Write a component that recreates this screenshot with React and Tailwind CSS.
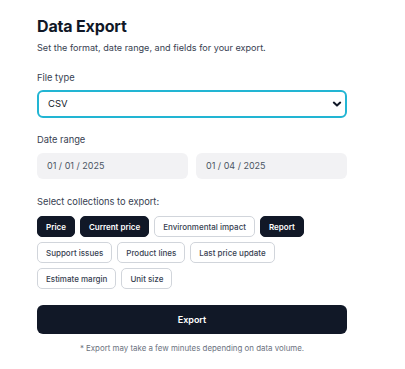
import React from "react";

const chips = [
  ["Price", true],
  ["Current price", true],
  ["Environmental impact", false],
  ["Report", true],
  ["Support issues", false],
  ["Product lines", false],
  ["Last price update", false],
  ["Estimate margin", false],
  ["Unit size", false],
];

export default function App() {
  return (
    <div className="w-[405px] h-[369px] bg-white text-[#111827]" style={{ fontFamily: "Inter, 'Noto Sans', sans-serif" }}>
      <div className="w-[310px] ml-[37px] pt-[16px] flex flex-col">
        <h1 className="text-[16px] leading-[20px] font-bold tracking-[-0.01em]">Data Export</h1>
        <p className="mt-[5px] text-[9.1px] leading-[14px] text-[#374151]">Set the format, date range, and fields for your export.</p>

        <label className="mt-[16px] text-[9.3px] leading-[14px] text-[#374151]">File type</label>
        <div className="mt-[5px] h-[28px] rounded-[6px] border-2 border-[#22b5d3] flex items-center justify-between pl-[9px] pr-[3px]">
          <span className="text-[9.5px]">CSV</span>
          <svg width="10" height="10" viewBox="0 0 10 10" fill="none" stroke="#111827" strokeWidth="2" strokeLinecap="round" strokeLinejoin="round"><path d="M1.8 3.6L5 6.6l3.2-3" /></svg>
        </div>

        <label className="mt-[15px] text-[9.3px] leading-[14px] text-[#374151]">Date range</label>
        <div className="mt-[6px] grid grid-cols-2 gap-[8px]">
          <div className="h-[26px] rounded-[6px] bg-[#f2f2f4] flex items-center pl-[10px] text-[9px] text-[#4b5563]">01 / 01 / 2025</div>
          <div className="h-[26px] rounded-[6px] bg-[#f2f2f4] flex items-center pl-[10px] text-[9px] text-[#4b5563]">01 / 04 / 2025</div>
        </div>

        <label className="mt-[16px] text-[9.3px] leading-[14px] text-[#374151]">Select collections to export:</label>
        <div className="mt-[7px] flex flex-wrap gap-x-[5px] gap-y-[5px]">
          {chips.map(([t, on]) => (
            <span
              key={t}
              className={
                on
                  ? "h-[21px] px-[8px] rounded-[5px] bg-[#111827] border border-[#111827] text-white text-[8px] font-semibold flex items-center"
                  : "h-[21px] px-[8px] rounded-[5px] bg-white border border-[#d1d5db] text-[#374151] text-[8px] font-medium flex items-center"
              }
            >
              {t}
            </span>
          ))}
        </div>

        <button className="mt-[16px] h-[29px] rounded-[6px] bg-[#111827] text-white text-[9px] font-semibold">Export</button>
        <p className="mt-[8px] text-center text-[7.9px] leading-[12px] text-[#6b7280]">* Export may take a few minutes depending on data volume.</p>
      </div>
    </div>
  );
}
